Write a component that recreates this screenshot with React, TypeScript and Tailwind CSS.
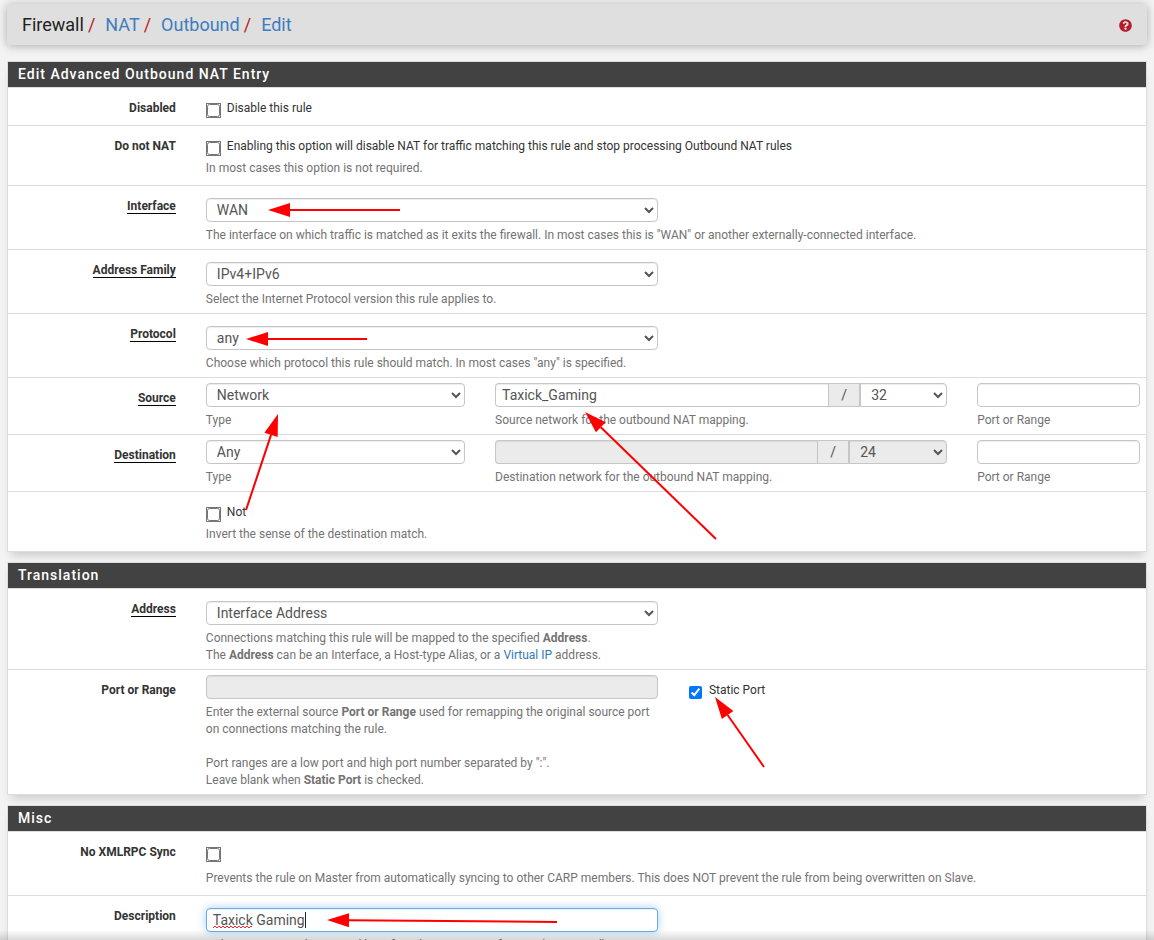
import React, { useState } from "react";
import { FaQuestionCircle } from "react-icons/fa";

interface PanelProps {
  title: string;
  children: React.ReactNode;
}

interface RowProps {
  label?: string;
  htmlFor?: string;
  required?: boolean;
  last?: boolean;
  children: React.ReactNode;
}

interface ArrowProps {
  tip: [number, number];
  tail: [number, number];
}

const control =
  "block h-6 w-full min-w-0 rounded border border-[#c6c6c6] bg-white px-1.5 text-sm text-[#555] shadow-[inset_0_1px_1px_rgba(0,0,0,0.075)] outline-none disabled:bg-[#ebebeb] disabled:opacity-100";

const Panel: React.FC<PanelProps> = ({ title, children }) => (
  <section className="mb-[10px] border border-[#ddd] bg-white shadow-[0_7px_9px_-4px_rgba(0,0,0,0.18)]">
    <h2 className="h-[26px] border-b border-[#ddd] bg-[#424242] px-2.5 text-sm leading-[25px] font-medium tracking-[1px] text-white">
      {title}
    </h2>
    <div className="overflow-hidden">{children}</div>
  </section>
);

const Row: React.FC<RowProps> = ({ label, htmlFor, required, last, children }) => (
  <div
    className={
      last
        ? "-mr-[9px] -ml-[10px] grid grid-cols-12"
        : "-mr-[9px] -ml-[10px] grid grid-cols-12 border-b border-[#ddd]"
    }
  >
    <label
      htmlFor={htmlFor}
      className="col-span-2 px-[15px] pt-3 text-right font-bold text-[#333]"
    >
      {label && (
        <span className={required ? "border-b border-black" : ""}>{label}</span>
      )}
    </label>
    {children}
  </div>
);

const Help: React.FC<{ children: React.ReactNode }> = ({ children }) => (
  <p className="mt-[5px] text-[#737373]">{children}</p>
);

interface CheckProps {
  id: string;
  label?: string;
  defaultChecked?: boolean;
}

const Check: React.FC<CheckProps> = ({ id, label, defaultChecked }) => {
  const [checked, setChecked] = useState(!!defaultChecked);

  return (
    <label htmlFor={id} className="flex items-start gap-[7px] text-[#333]">
      <input
        id={id}
        type="checkbox"
        checked={checked}
        onChange={() => setChecked(!checked)}
        className={
          checked
            ? "mt-1 ml-px size-[13px]"
            : "mt-1 ml-px size-[13px] outline-1 outline-[#757575]"
        }
      />
      {label}
    </label>
  );
};

const Slash = () => (
  <span className="flex h-6 w-8 shrink-0 items-center justify-center border border-[#c6c6c6] bg-[#ebebeb] text-sm text-[#555]">
    /
  </span>
);

const Arrow: React.FC<ArrowProps> = ({ tip, tail }) => {
  const dx = tail[0] - tip[0];
  const dy = tail[1] - tip[1];
  const length = Math.hypot(dx, dy);
  const ux = dx / length;
  const uy = dy / length;
  const baseX = tip[0] + ux * 22;
  const baseY = tip[1] + uy * 22;

  return (
    <g>
      <line
        x1={baseX}
        y1={baseY}
        x2={tail[0]}
        y2={tail[1]}
        stroke="#f00"
        strokeWidth="2"
      />
      <polygon
        points={`${tip[0]},${tip[1]} ${baseX - uy * 7},${baseY + ux * 7} ${baseX + uy * 7},${baseY - ux * 7}`}
        fill="#f00"
      />
    </g>
  );
};

const Breadcrumb = () => (
  <header className="mb-4 flex h-[41px] items-center justify-between rounded bg-[#dfdfdf] px-[15px] shadow-[0_1px_10px_rgba(0,0,0,0.3)]">
    <nav className="flex text-lg leading-[25px] text-[#212121]">
      <span>Firewall</span>
      <span className="pr-[5px] pl-1 text-[#b71c1c]">/</span>
      <a href="#nat" className="pl-[5px] text-[#3d7dc0]">
        NAT
      </a>
      <span className="pr-[5px] pl-1 text-[#b71c1c]">/</span>
      <a href="#outbound" className="pl-[5px] text-[#3d7dc0]">
        Outbound
      </a>
      <span className="pr-[5px] pl-1 text-[#b71c1c]">/</span>
      <a href="#edit" className="pl-[5px] text-[#3d7dc0]">
        Edit
      </a>
    </nav>
    <a href="#help" aria-label="Help" className="mt-0.5 text-[#b71c2c]">
      <FaQuestionCircle size={13} />
    </a>
  </header>
);

const App = () => {
  const [network, setNetwork] = useState("Taxick_Gaming");
  const [description, setDescription] = useState("Taxick Gaming");

  return (
    <div className="relative h-screen overflow-hidden bg-[#f3f3f3] px-[7px] pt-1 font-[Roboto,sans-serif] text-xs leading-[17px]">
      <Breadcrumb />

      <Panel title="Edit Advanced Outbound NAT Entry">
        <Row label="Disabled" htmlFor="disabled">
          <div className="col-span-10 px-[15px] pt-3 pb-2">
            <Check id="disabled" label="Disable this rule" />
          </div>
        </Row>
        <Row label="Do not NAT" htmlFor="nonat">
          <div className="col-span-10 px-[15px] pt-3 pb-2">
            <Check
              id="nonat"
              label="Enabling this option will disable NAT for traffic matching this rule and stop processing Outbound NAT rules"
            />
            <Help>In most cases this option is not required.</Help>
          </div>
        </Row>
        <Row label="Interface" htmlFor="interface" required>
          <div className="col-span-10 grid grid-cols-10 pt-3 pb-[5px]">
            <div className="col-span-5 px-[15px]">
              <select id="interface" className={control}>
                <option>WAN</option>
              </select>
            </div>
            <div className="col-span-10 px-[15px]">
              <Help>
                The interface on which traffic is matched as it exits the
                firewall. In most cases this is "WAN" or another
                externally-connected interface.
              </Help>
            </div>
          </div>
        </Row>
        <Row label="Address Family" htmlFor="family" required>
          <div className="col-span-5 px-[15px] pt-3 pb-[5px]">
            <select id="family" className={control}>
              <option>IPv4+IPv6</option>
            </select>
            <Help>Select the Internet Protocol version this rule applies to.</Help>
          </div>
        </Row>
        <Row label="Protocol" htmlFor="protocol" required>
          <div className="col-span-5 px-[15px] pt-3 pb-[5px]">
            <select id="protocol" className={control}>
              <option>any</option>
            </select>
            <Help>
              Choose which protocol this rule should match. In most cases "any"
              is specified.
            </Help>
          </div>
        </Row>
        <Row label="Source" htmlFor="source-type" required>
          <div className="col-span-3 px-[15px] py-[5px]">
            <select id="source-type" className={control}>
              <option>Network</option>
            </select>
            <Help>Type</Help>
          </div>
          <div className="col-span-5 px-[15px] py-[5px]">
            <div className="flex">
              <input
                type="text"
                aria-label="Source network"
                value={network}
                onChange={(e) => setNetwork(e.target.value)}
                className={`${control} flex-1 rounded-r-none border-r-0`}
              />
              <Slash />
              <div className="w-[87px] shrink-0">
                <select
                  aria-label="Source mask"
                  className={`${control} rounded-l-none`}
                >
                  <option>32</option>
                </select>
              </div>
            </div>
            <Help>Source network for the outbound NAT mapping.</Help>
          </div>
          <div className="col-span-2 px-[15px] py-[5px]">
            <input type="text" id="source-port" className={control} />
            <Help>
              <label htmlFor="source-port">Port or Range</label>
            </Help>
          </div>
        </Row>
        <Row label="Destination" htmlFor="destination-type" required>
          <div className="col-span-3 px-[15px] py-[5px]">
            <select id="destination-type" className={control}>
              <option>Any</option>
            </select>
            <Help>Type</Help>
          </div>
          <div className="col-span-5 px-[15px] py-[5px]">
            <div className="flex">
              <input
                type="text"
                aria-label="Destination network"
                disabled
                className={`${control} flex-1 rounded-r-none border-r-0`}
              />
              <Slash />
              <div className="w-[98px] shrink-0">
                <select
                  aria-label="Destination mask"
                  disabled
                  className={`${control} rounded-l-none`}
                >
                  <option>24</option>
                </select>
              </div>
            </div>
            <Help>Destination network for the outbound NAT mapping.</Help>
          </div>
          <div className="col-span-2 px-[15px] py-[5px]">
            <input type="text" id="destination-port" className={control} />
            <Help>
              <label htmlFor="destination-port">Port or Range</label>
            </Help>
          </div>
        </Row>
        <Row last>
          <div className="col-span-10 px-[15px] pt-3 pb-2">
            <Check id="not" label="Not" />
            <Help>Invert the sense of the destination match.</Help>
          </div>
        </Row>
      </Panel>

      <Panel title="Translation">
        <Row label="Address" htmlFor="address" required>
          <div className="col-span-5 px-[15px] pt-3 pb-[5px]">
            <select id="address" className={control}>
              <option>Interface Address</option>
            </select>
            <Help>
              Connections matching this rule will be mapped to the specified{" "}
              <b>Address</b>.
              <br />
              The <b>Address</b> can be an Interface, a Host-type Alias, or a{" "}
              <a href="#virtual-ip" className="text-[#337ab7]">
                Virtual IP
              </a>{" "}
              address.
            </Help>
          </div>
        </Row>
        <Row label="Port or Range" htmlFor="port" last>
          <div className="col-span-5 px-[15px] py-[5px]">
            <input type="text" id="port" disabled className={control} />
            <Help>
              Enter the external source <b>Port or Range</b> used for remapping
              the original source port on connections matching the rule.
              <br />
              <br />
              Port ranges are a low port and high port number separated by ":".
              <br />
              Leave blank when <b>Static Port</b> is checked.
            </Help>
          </div>
          <div className="col-span-5 px-[15px] pt-3">
            <Check id="static-port" label="Static Port" defaultChecked />
          </div>
        </Row>
      </Panel>

      <Panel title="Misc">
        <Row label="No XMLRPC Sync" htmlFor="nosync">
          <div className="col-span-10 px-[15px] pt-3 pb-2">
            <div className="h-[21px]">
              <Check id="nosync" />
            </div>
            <Help>
              Prevents the rule on Master from automatically syncing to other
              CARP members. This does NOT prevent the rule from being
              overwritten on Slave.
            </Help>
          </div>
        </Row>
        <Row label="Description" htmlFor="description" last>
          <div className="col-span-5 px-[15px] pt-3 pb-[5px]">
            <div className="relative">
              <input
                type="text"
                id="description"
                value={description}
                onChange={(e) => setDescription(e.target.value)}
                className="block h-6 w-full rounded border border-[#66afe9] bg-white px-1.5 text-sm text-[#555] shadow-[inset_0_1px_1px_rgba(0,0,0,0.075),0_0_8px_rgba(102,175,233,0.6)] outline-none"
              />
              {/* spelling mark and caret */}
              <svg
                className="pointer-events-none absolute top-0 left-0 h-6 w-28"
                fill="none"
                aria-hidden="true"
              >
                <path
                  d="M7 20l2-2 2 2 2-2 2 2 2-2 2 2 2-2 2 2 2-2 2 2 2-2 2 2 2-2 2 2 2-2 2 2 2-2 2 2 2-2 1 1"
                  stroke="#f22"
                  strokeWidth="1"
                />
                <path d="M99.500 4v16" stroke="#222" />
              </svg>
            </div>
            <Help>
              A description may be entered here for administrative reference
              (not parsed).
            </Help>
          </div>
        </Row>
      </Panel>

      <div className="pointer-events-none absolute inset-x-0 bottom-0 h-[10px] bg-linear-to-b from-transparent to-black/15" />

      <svg
        className="pointer-events-none absolute top-0 left-0 h-[940px] w-[1154px]"
        viewBox="0 0 1154 940"
        aria-hidden="true"
      >
        <Arrow tip={[268, 210]} tail={[400, 210]} />
        <Arrow tip={[246, 339]} tail={[367, 339]} />
        <Arrow tip={[278, 414]} tail={[246, 510]} />
        <Arrow tip={[585, 412]} tail={[716, 539]} />
        <Arrow tip={[715, 697]} tail={[764, 767]} />
        <Arrow tip={[327, 920]} tail={[557, 922]} />
      </svg>
    </div>
  );
};

export default App;
